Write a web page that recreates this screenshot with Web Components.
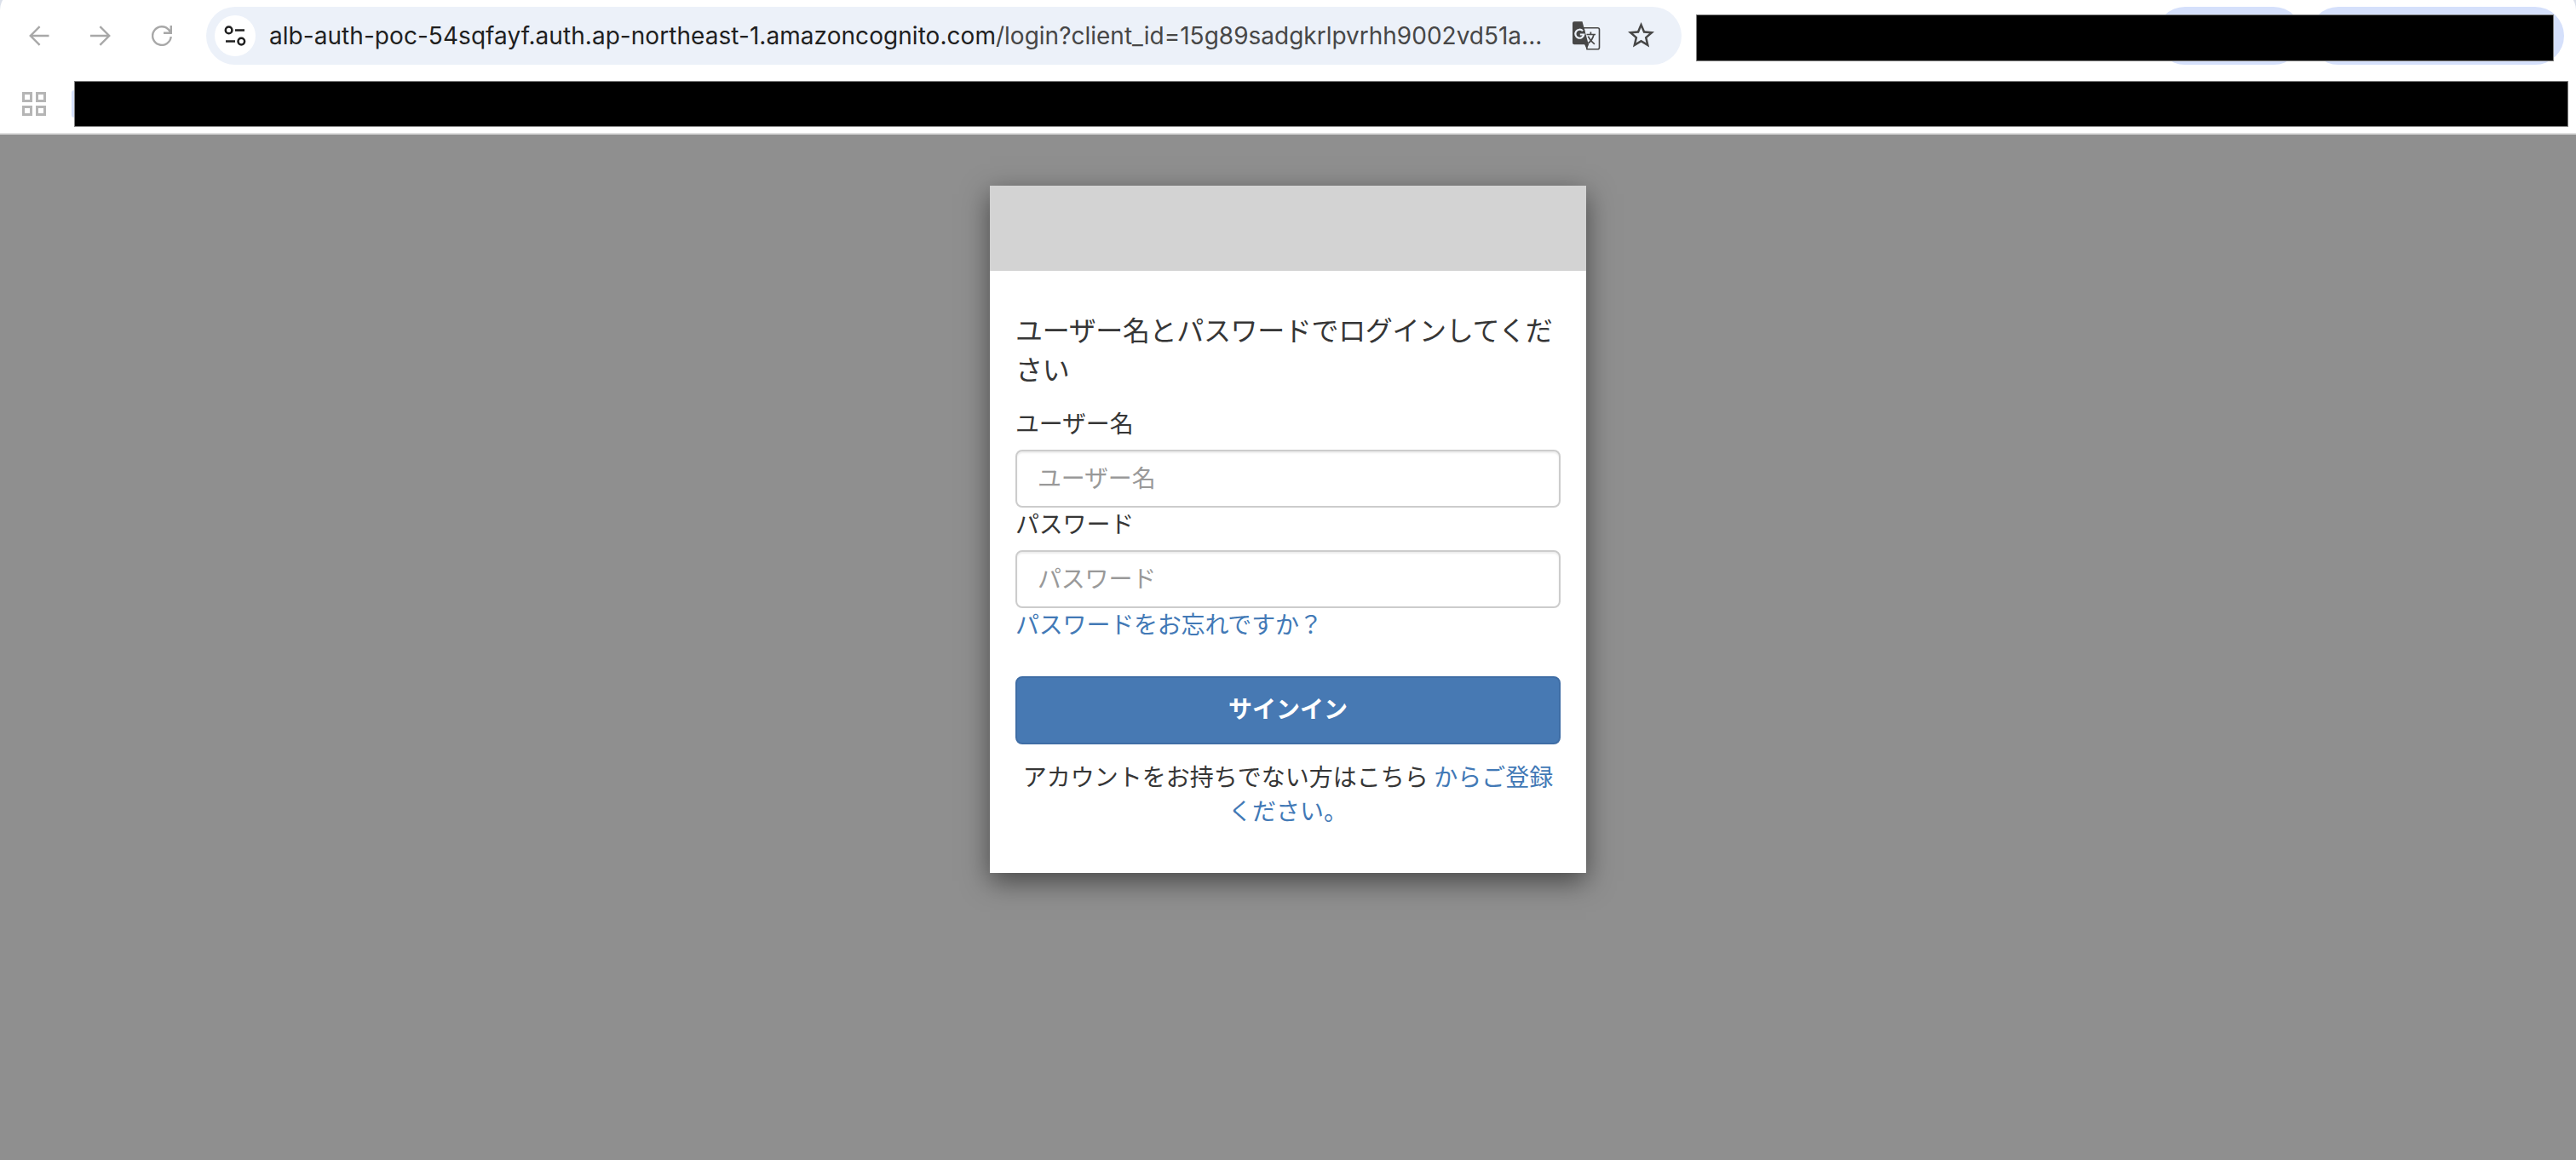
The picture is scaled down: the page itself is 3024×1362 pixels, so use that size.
<!DOCTYPE html>
<html lang="ja">
<head>
<meta charset="utf-8">
<title>Signin</title>
<style>
  html, body { margin: 0; height: 100%; }
  body { display: flex; flex-direction: column; overflow: hidden; background: #8f8f8f; font-family: "Noto Sans CJK JP", sans-serif; }
</style>
</head>
<body>
<browser-toolbar>
  <address-bar slot="address" host="alb-auth-poc-54sqfayf.auth.ap-northeast-1.amazoncognito.com" path="/login?client_id=15g89sadgkrlpvrhh9002vd51a..."></address-bar>
</browser-toolbar>
<login-page>
  <login-card>
    <span slot="title">ユーザー名とパスワードでログインしてください</span>
    <form-field label="ユーザー名" type="text"></form-field>
    <form-field label="パスワード" type="password"></form-field>
    <text-link>パスワードをお忘れですか？</text-link>
    <submit-button>サインイン</submit-button>
    <span slot="footer">アカウントをお持ちでない方はこちら <text-link>からご登録ください。</text-link></span>
  </login-card>
</login-page>
<script>
const define = (name, html, setup) => customElements.define(name, class extends HTMLElement {
  constructor() {
    super();
    this.attachShadow({ mode: 'open' }).innerHTML = html;
  }
  connectedCallback() { if (setup) setup(this, this.shadowRoot); }
});

// name: [pixel size, viewBox, shapes]
const ICONS = {
  back: [24, '0 0 24 24', '<path d="M23.5 12H2M12.6 1.2L1.8 12l10.8 10.8" fill="none" stroke="currentColor" stroke-width="2.4"/>'],
  forward: [24, '0 0 24 24', '<path d="M0 12h22M11.4 1.2L22.2 12 11.4 22.8" fill="none" stroke="currentColor" stroke-width="2.4"/>'],
  reload: [24, '0 0 24 24', '<path d="M22.7 13A10.8 10.8 0 1 1 20.2 5.1L22.6 8.6M14 8.7h8.8V0" fill="none" stroke="currentColor" stroke-width="2.4"/>'],
  tune: [26, '0 0 26 26', '<g fill="none" stroke="currentColor" stroke-width="2.5"><circle cx="5.6" cy="6.4" r="3.8"/><path d="M13 6.4h11M2 19.6h11"/><circle cx="20.3" cy="19.6" r="3.8"/></g>'],
  grid: [28, '0 0 28 28', '<g fill="none" stroke="currentColor" stroke-width="3"><path d="M1.500 1.500h9v9h-9zM17.500 1.500h9v9h-9zM1.500 17.500h9v9h-9zM17.500 17.500h9v9h-9z"/></g>'],
  star: [32, '2 2 20.6 20.6', '<path fill="currentColor" d="M22 9.24l-7.19-.62L12 2 9.19 8.63 2 9.24l5.460 4.730L5.820 21 12 17.270 18.180 21l-1.630-7.030L22 9.240zM12 15.400l-3.760 2.270 1-4.280-3.320-2.880 4.380-.380L12 6.100l1.710 4.040 4.380.380-3.320 2.880 1 4.280L12 15.400z"/>'],
  translate: [34, '0 0 34 34', '<path d="M14 7.800h16.500a2 2 0 0 1 2 2v21a2 2 0 0 1-2 2H18z" fill="none" stroke="currentColor" stroke-width="1.600"/><path d="M3 .2h9.500l7.300 27H3a2 2 0 0 1-2-2V2.200a2 2 0 0 1 2-2z" fill="currentColor"/><path d="M15 27h5.200l-2.400 5.500z" fill="currentColor"/><path d="M13 11.300a5 5 0 1 0 1.300 4.200H9.800" fill="none" stroke="#ecf1f9" stroke-width="2.200"/><path d="M17.500 15.500h10.500M22.400 12.500v3M26 15.500c-1 4.500-4 8.500-7 10.600M19.300 17.600c1.600 3.600 4 6.500 7.600 9.300" fill="none" stroke="currentColor" stroke-width="1.700"/>']
};
define('tool-icon', '<style>:host{display:block;flex:none}svg{display:block}</style>', (el, root) => {
  const [s, box, body] = ICONS[el.getAttribute('name')];
  root.innerHTML += `<svg width="${s}" height="${s}" viewBox="${box}">${body}</svg>`;
});

define('address-bar', `<style>
  :host{display:flex;align-items:center;box-sizing:border-box;width:1732px;height:68px;border-radius:34px;background:#ecf1f9;padding-left:10px;padding-right:31px;color:#474747}
  .site{display:flex;align-items:center;justify-content:center;width:48px;height:48px;border-radius:50%;background:#fff;color:#1f1f1f;margin-right:16px}
  .url{flex:1;white-space:pre;font:28px/40px Inter,sans-serif}
  .host{color:#1f1f1f;letter-spacing:.05px}
  .path{letter-spacing:0}
  .translate{margin-right:32px}
</style>
<div class="site"><tool-icon name="tune"></tool-icon></div>
<div class="url"><span class="host"></span><span class="path"></span></div>
<tool-icon class="translate" name="translate"></tool-icon>
<tool-icon name="star"></tool-icon>`, (el, root) => {
  root.querySelector('.host').textContent = el.getAttribute('host');
  root.querySelector('.path').textContent = el.getAttribute('path');
});

define('masked-area', `<style>:host{display:block;box-sizing:border-box;background:#000;border:1px solid #808080}</style>`);

define('browser-toolbar', `<style>
  :host{display:block;flex:none;height:158px;box-sizing:border-box;border-bottom:2px solid #dedede;background:#dbe0ea;overflow:hidden}
  .surface{margin-top:-12px;padding-top:20px;height:148px;background:#fff;border-radius:24px 24px 0 0}
  .nav{display:flex;align-items:center;height:68px;padding-left:34px;color:#a8a8a8}
  .buttons{display:flex;gap:48px;margin-right:40px}
  .actions{display:grid;width:1019px;height:68px;margin-left:17px;align-items:center}
  .actions>*{grid-area:1/1}
  .pills{display:flex;gap:8px;padding-left:540px}
  .pills i{height:68px;border-radius:34px;background:#d5e0fb}
  .actions masked-area{width:1007px;height:55px;margin-top:5px}
  .marks{display:flex;align-items:center;padding:19px 0 0 26px;color:#b5b5b5}
  .chip{width:3px;height:32px;margin-left:30px;background:#d5e0fb;border-radius:3px 0 0 3px}
  .marks masked-area{width:2928px;height:54px}
</style>
<div class="surface">
  <div class="nav">
    <div class="buttons"><tool-icon name="back"></tool-icon><tool-icon name="forward"></tool-icon><tool-icon name="reload"></tool-icon></div>
    <slot name="address"></slot>
    <div class="actions"><div class="pills"><i style="width:172px"></i><i style="width:299px"></i></div><masked-area></masked-area></div>
  </div>
  <div class="marks"><tool-icon name="grid"></tool-icon><div class="chip"></div><masked-area></masked-area></div>
</div>`);

define('login-page', `<style>:host{display:flex;flex:1;justify-content:center;align-items:flex-start;padding-top:60px;background:#8f8f8f}</style><slot></slot>`);

define('login-card', `<style>
  :host{display:block;width:700px;height:807px;background:#fff;color:#363636;box-shadow:0 10px 30px rgba(0,0,0,.5);font-size:28px;line-height:40px}
  header{height:100px;background:#d3d3d3}
  main{padding:45px 30px 0}
  h1{margin:0 0 23px;font-size:32px;line-height:46px;font-weight:400;letter-spacing:-.35px}
  ::slotted(text-link){display:block;line-height:36px;padding-bottom:4px;letter-spacing:-.2px}
  footer{margin-top:17px;text-align:center}
</style>
<header></header>
<main><h1><slot name="title"></slot></h1><slot></slot><footer><slot name="footer"></slot></footer></main>`);

define('form-field', `<style>
  :host{display:block;letter-spacing:-.2px}
  label{display:block;line-height:36px;margin-bottom:14px}
  input{display:block;box-sizing:border-box;width:640px;height:68px;padding:11px 24px 15px;border:2px solid #ccc;border-radius:8px;background:#fff;box-shadow:inset 0 2px 2px rgba(0,0,0,.075);font:inherit;letter-spacing:inherit;color:#555;outline:0}
  input::placeholder{color:#999;opacity:1}
</style>
<label for="f"></label><input id="f">`, (el, root) => {
  const text = el.getAttribute('label'), input = root.querySelector('input');
  root.querySelector('label').textContent = text;
  input.placeholder = text;
  input.type = el.getAttribute('type');
});

define('text-link', `<style>:host{color:#4279b6}a{color:inherit;text-decoration:none}</style><a href="#"><slot></slot></a>`);

define('submit-button', `<style>
  :host{display:block;margin-top:40px}
  button{display:block;box-sizing:border-box;width:640px;height:80px;padding:0 0 6px;border:2px solid #3f6da5;border-radius:8px;background:#4779b3;color:#fff;font:bold 28px/40px "Noto Sans CJK JP",sans-serif}
</style><button type="button"><slot></slot></button>`);
</script>
</body>
</html>
